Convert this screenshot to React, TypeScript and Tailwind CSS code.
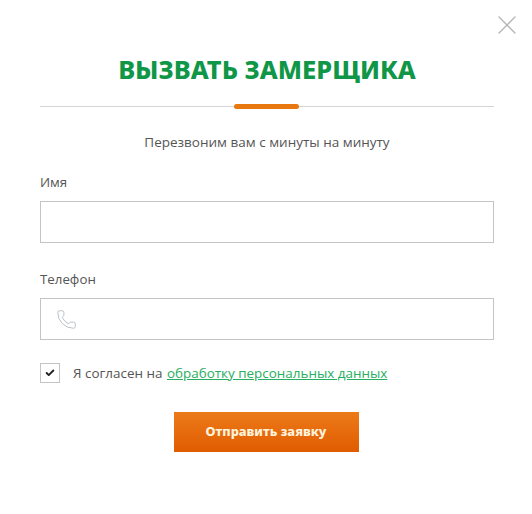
import { Phone, Check, X } from "lucide-react";

function Field({ label, icon }: { label: string; icon?: boolean }) {
  return (
    <div>
      <label className="block text-[13.3px] leading-[18px] text-[#555555]">{label}</label>
      <div className="mt-[10px] flex h-[42px] items-center border border-[#c4c4c4] bg-white pl-[15px]">
        {icon ? <Phone size={21} strokeWidth={1} className="text-[#b0b8c0]" /> : null}
      </div>
    </div>
  );
}

export default function App() {
  return (
    <div className="relative h-[514px] w-[532px] bg-white font-['Open_Sans',sans-serif]">
      <button className="absolute left-[496px] top-[14px] text-[#b5b5b5]">
        <X size={22} strokeWidth={1} className="scale-[1.45]" />
      </button>

      <div className="pl-[40px] pr-[38px] pt-[52px]">
        <h2 className="text-center font-['Noto_Sans',sans-serif] text-[25.4px] font-extrabold leading-[34px] text-[#0f9647]">
          ВЫЗВАТЬ ЗАМЕРЩИКА
        </h2>

        <div className="mt-[18px] flex h-[5px] items-center justify-center bg-[linear-gradient(#0000_2px,#d5d5d5_2px,#d5d5d5_3px,#0000_3px)]">
          <div className="ml-[-2px] h-[5px] w-[65px] rounded-full bg-[#e9780f]" />
        </div>

        <p className="mt-[23px] text-center text-[13.5px] leading-[20px] text-[#555555]">
          Перезвоним вам с минуты на минуту
        </p>

        <div className="mt-[21px] flex flex-col gap-[27px]">
          <Field label="Имя" />
          <Field label="Телефон" icon />
        </div>

        <div className="mt-[23px] flex items-center gap-[13px]">
          <div className="flex h-[20px] w-[20px] items-center justify-center border border-[#c4c4c4]">
            <Check size={10} strokeWidth={4.5} className="text-[#222222]" />
          </div>
          <span className="text-[13.45px] leading-[20px] text-[#555555]">
            Я согласен на{" "}
            <a className="ml-[1px] text-[#27ae60] underline">обработку персональных данных</a>
          </span>
        </div>

        <div className="mt-[29px] flex justify-center">
          <button className="ml-[-2px] h-[40px] w-[185px] bg-gradient-to-b from-[#ec7a18] to-[#e05c00] font-['Noto_Sans',sans-serif] text-[12.8px] font-extrabold text-[#fff3dc]">
            Отправить заявку
          </button>
        </div>
      </div>
    </div>
  );
}
